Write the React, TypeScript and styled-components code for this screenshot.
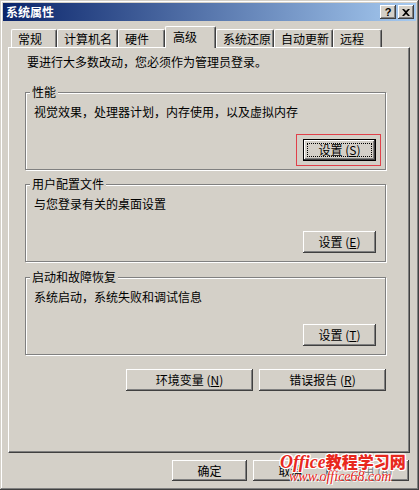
import React from "react";
import styled, { createGlobalStyle } from "styled-components";

const GlobalStyle = createGlobalStyle`
  body {
    margin: 0;
    background: #d4d0c8;
  }
`;

interface TabInfo {
  label: string
  width: number
  active?: boolean
}

const tabs: TabInfo[] = [
  { label: "常规", width: 46 },
  { label: "计算机名", width: 61 },
  { label: "硬件", width: 47 },
  { label: "高级", width: 51, active: true },
  { label: "系统还原", width: 58 },
  { label: "自动更新", width: 59 },
  { label: "远程", width: 49 },
];

interface GroupInfo {
  title: string
  text: string
  key: string
  top: number
  focused?: boolean
}

const groups: GroupInfo[] = [
  { title: "性能", text: "视觉效果，处理器计划，内存使用，以及虚拟内存", key: "S", top: 23, focused: true },
  { title: "用户配置文件", text: "与您登录有关的桌面设置", key: "E", top: 14 },
  { title: "启动和故障恢复", text: "系统启动，系统失败和调试信息", key: "T", top: 15 },
];

const App = () => {
  return (
    <>
      <GlobalStyle />
      <Window>
        <TitleBar>
          <TitleText>系统属性</TitleText>
          <CaptionButton>
            <HelpGlyph>?</HelpGlyph>
          </CaptionButton>
          <CaptionButton $gap>
            <svg width="8" height="7" viewBox="0 0 8 7">
              <path d="M0 0h2l2 2 2-2h2L5 3.5 8 7H6L4 5 2 7H0l3-3.5z" fill="#000" />
            </svg>
          </CaptionButton>
        </TitleBar>
        <Body>
          <TabRow>
            {tabs.map(t => (
              <Tab key={t.label} $w={t.width} $active={t.active}>{t.label}</Tab>
            ))}
          </TabRow>
          <Panel>
            <Intro>要进行大多数改动，您必须作为管理员登录。</Intro>
            {groups.map(g => (
              <GroupBox key={g.title} $top={g.top}>
                <Legend>{g.title}</Legend>
                <Description>{g.text}</Description>
                <GroupButton $focused={g.focused}>
                  设置 (<u>{g.key}</u>)
                </GroupButton>
              </GroupBox>
            ))}
            <EnvRow>
              <WideButton>环境变量 (<u>N</u>)</WideButton>
              <WideButton>错误报告 (<u>R</u>)</WideButton>
            </EnvRow>
          </Panel>
          <Footer>
            <FooterButton>确定</FooterButton>
            <FooterButton>取消</FooterButton>
            <FooterButton><Disabled>应用 (<u>A</u>)</Disabled></FooterButton>
          </Footer>
        </Body>
        <Watermark>
          <WmTitle><WmLatin>Office</WmLatin>教程学习网</WmTitle>
          <WmUrl>www.office68.com</WmUrl>
        </Watermark>
      </Window>
    </>
  )
}

const bevel = `
  box-shadow: inset -1px -1px #404040, inset 1px 1px #ffffff,
    inset -2px -2px #808080, inset 2px 2px #d4d0c8;
`

const Window = styled.div`
  position: relative;
  width: 419px;
  height: 490px;
  box-sizing: border-box;
  padding: 3px;
  background: #d4d0c8;
  box-shadow: inset -1px -1px #404040, inset 1px 1px #d4d0c8,
    inset -2px -2px #808080, inset 2px 2px #ffffff;
  display: flex;
  flex-direction: column;
  font-family: "Noto Sans CJK SC", "Liberation Sans", sans-serif;
  font-size: 12px;
  color: #000;
  overflow: hidden;
`

const TitleBar = styled.div`
  height: 18px;
  display: flex;
  align-items: center;
  padding: 0 2px 0 3px;
  background: linear-gradient(to right, #0a246a, #a6caf0);
  color: #fff;
`

const TitleText = styled.span`
  flex: 1;
  font-weight: bold;
  font-size: 12px;
  line-height: 18px;
`

const CaptionButton = styled.div<{ $gap?: boolean }>`
  width: 16px;
  height: 14px;
  box-sizing: border-box;
  margin-left: ${p => p.$gap ? 2 : 0}px;
  background: #d4d0c8;
  ${bevel}
  display: flex;
  align-items: center;
  justify-content: center;
`

const HelpGlyph = styled.span`
  font-family: "Liberation Sans", sans-serif;
  font-weight: bold;
  font-size: 11px;
  line-height: 11px;
  color: #000;
  margin-top: 1px;
`

const Body = styled.div`
  flex: 1;
  display: flex;
  flex-direction: column;
  padding: 5px 6px 0 5px;
`

const TabRow = styled.div`
  height: 21px;
  display: flex;
  align-items: flex-end;
  padding-left: 3px;
  position: relative;
  z-index: 1;
`

const Tab = styled.div<{ $w: number; $active?: boolean }>`
  position: relative;
  z-index: ${p => p.$active ? 2 : 1};
  width: ${p => p.$w}px;
  height: ${p => p.$active ? 22 : 18}px;
  margin-bottom: ${p => p.$active ? -1 : 0}px;
  box-sizing: border-box;
  padding-left: ${p => p.$active ? 7 : 6}px;
  border-top: 1px solid #fff;
  border-left: 1px solid #fff;
  border-right: 1px solid #404040;
  border-radius: 2px 2px 0 0;
  box-shadow: inset -1px 0 #808080;
  background: #d4d0c8;
  line-height: ${p => p.$active ? 19 : 17}px;
  white-space: nowrap;
`

const Panel = styled.div`
  height: 406px;
  box-sizing: border-box;
  border-top: 1px solid #fff;
  border-left: 1px solid #fff;
  border-right: 1px solid #404040;
  border-bottom: 1px solid #404040;
  box-shadow: inset -1px -1px #808080;
  padding: 7px 0 0 16px;
  display: flex;
  flex-direction: column;
`

const Intro = styled.div`
  line-height: 14px;
  margin-left: 2px;
`

const GroupBox = styled.div<{ $top: number }>`
  width: 361px;
  height: 78px;
  box-sizing: border-box;
  margin-top: ${p => p.$top}px;
  border: 1px solid #808080;
  box-shadow: inset 1px 1px #fff, 1px 1px #fff;
  display: flex;
  flex-direction: column;
  padding: 0 9px 8px 0;
`

const Legend = styled.div`
  align-self: flex-start;
  margin: -8px 0 0 4px;
  padding: 0 2px;
  background: #d4d0c8;
  line-height: 14px;
`

const Description = styled.div`
  margin: 6px 0 0 8px;
  line-height: 14px;
`

const PushButton = styled.div`
  position: relative;
  box-sizing: border-box;
  display: flex;
  align-items: center;
  justify-content: center;
  background: #d4d0c8;
  ${bevel}
  line-height: 14px;
  white-space: nowrap;
  u {
    text-underline-offset: 1px;
  }
`

const GroupButton = styled(PushButton)<{ $focused?: boolean }>`
  align-self: flex-end;
  margin-top: auto;
  width: 73px;
  height: 22px;
  ${p => p.$focused ? `
    box-shadow: inset 0 0 0 1px #000, inset -2px -2px #404040,
      inset 2px 2px #ffffff, inset -3px -3px #808080;
    &::before {
      content: "";
      position: absolute;
      inset: 4px;
      border: 1px dotted #000;
    }
    &::after {
      content: "";
      position: absolute;
      top: -5px;
      bottom: -5px;
      left: -7px;
      right: -5px;
      border: 1px solid #e0404a;
    }
  ` : ""}
`

const EnvRow = styled.div`
  width: 361px;
  margin-top: 14px;
  display: flex;
  justify-content: flex-end;
  gap: 6px;
`

const WideButton = styled(PushButton)`
  width: 127px;
  height: 22px;
`

const Footer = styled.div`
  margin-top: 7px;
  padding-right: 1px;
  display: flex;
  justify-content: flex-end;
  gap: 6px;
`

const FooterButton = styled(PushButton)`
  width: 75px;
  height: 21px;
`

const Disabled = styled.span`
  color: #808080;
  text-shadow: 1px 1px 0 #fff;
`

const Watermark = styled.div`
  position: absolute;
  left: 280px;
  top: 453px;
  pointer-events: none;
  color: #e8281e;
`

const WmTitle = styled.div`
  font-family: "Noto Sans CJK SC", sans-serif;
  font-weight: 900;
  font-size: 16px;
  line-height: 17px;
  white-space: nowrap;
  text-shadow: -1px -1px 0 #fff, 1px -1px 0 #fff, -1px 1px 0 #fff, 1px 1px 0 #fff,
    0 1px 0 #fff, 0 -1px 0 #fff, 1px 0 0 #fff, -1px 0 0 #fff;
`

const WmLatin = styled.span`
  font-family: "Liberation Serif", serif;
  font-style: italic;
  font-weight: bold;
  font-size: 18px;
`

const WmUrl = styled.div`
  margin-left: 9px;
  font-family: "Liberation Serif", serif;
  font-style: italic;
  font-size: 14px;
  line-height: 12px;
  white-space: nowrap;
  text-shadow: 1px 1px 0 #fff, -1px 0 0 #fff;
`

export default App
